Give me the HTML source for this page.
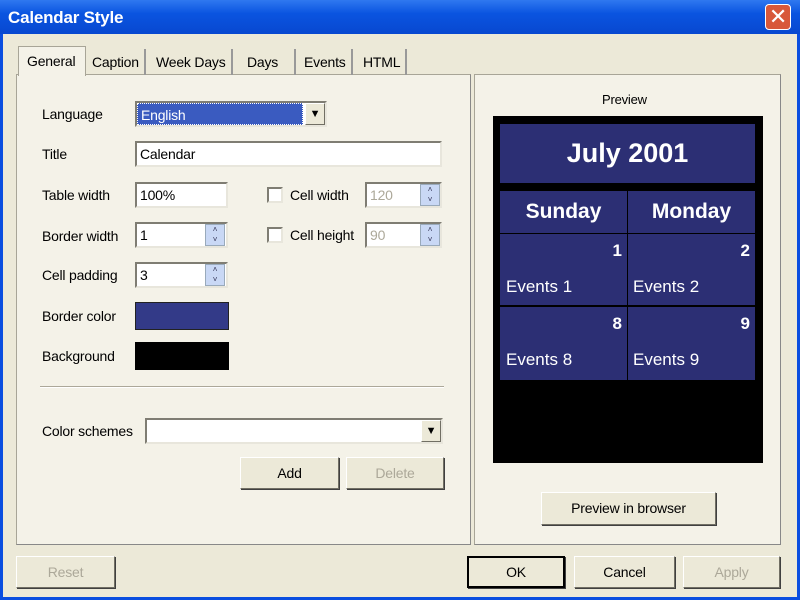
<!DOCTYPE html>
<html><head><style>
*{box-sizing:border-box;margin:0;padding:0}
body{width:800px;height:600px;overflow:hidden;background:#0a4ee0;font-family:"Liberation Sans",sans-serif;font-size:14px;color:#000;position:relative;letter-spacing:-0.2px}
.a{position:absolute}
.title{left:0;top:0;width:800px;height:34px;background:linear-gradient(#2f78f0,#0a54e0 40%,#0848d0);color:#fff;font-weight:bold;font-size:17px;padding:8px 8px}
.close{left:765px;top:4px;width:26px;height:26px;background:#d8583a;border:1px solid #fff;border-radius:4px;color:#fff;font-size:22px;text-align:center;line-height:24px}
.client{left:3px;top:34px;width:794px;height:563px;background:#ece9d8}
.panel{border:1px solid #a8a597;border-right-color:#888;border-bottom-color:#888;background:#f4f2e8}
.in{background:#fff;border:2px solid;border-color:#7f7d73 #e8e6dc #e8e6dc #7f7d73;padding:3px 3px}
.btn{background:#ece9d8;border:1px solid;border-color:#fff #716f64 #716f64 #fff;box-shadow:1px 1px 0 #404040;text-align:center;line-height:30px}
.dis{color:#aca899}
.tab{top:49px;height:26px;padding:5px 5px;border-right:2px solid #999}
.spin{width:20px;height:22px;background:#c9d8f5;border:1px solid #9ab;font-size:8px;color:#335;text-align:center;line-height:10px}
.cb{width:16px;height:16px;background:#fff;border:2px solid;border-color:#7f7d73 #e8e6dc #e8e6dc #7f7d73}
.cal{background:#2c2f74;color:#fff;letter-spacing:0}
</style></head><body>
<div class="a title">Calendar Style</div>
<div class="a close">✕</div>
<div class="a client"></div>
<div class="a panel" style="left:16px;top:74px;width:455px;height:471px"></div>
<div class="a panel" style="left:474px;top:74px;width:307px;height:471px"></div>
<div class="a" style="left:18px;top:46px;width:68px;height:30px;background:#f4f2e8;border:1px solid #a8a597;border-bottom:none;padding:6px 8px">General</div>
<div class="a tab" style="left:87px">Caption</div>
<div class="a tab" style="left:151px">Week Days</div>
<div class="a tab" style="left:242px;width:54px">Days</div>
<div class="a tab" style="left:299px">Events</div>
<div class="a tab" style="left:358px">HTML</div>

<div class="a" style="left:42px;top:106px">Language</div>
<div class="a in" style="left:135px;top:101px;width:192px;height:26px;padding:0"><div style="background:#3a5bc0;color:#fff;width:166px;height:22px;padding:3px 3px;border:1px dotted #fff">English</div><div class="a btn" style="right:0;top:0;width:20px;height:22px;line-height:20px;font-size:11px;box-shadow:none">▼</div></div>
<div class="a" style="left:42px;top:146px">Title</div>
<div class="a in" style="left:135px;top:141px;width:307px;height:26px">Calendar</div>
<div class="a" style="left:42px;top:187px">Table width</div>
<div class="a in" style="left:135px;top:182px;width:93px;height:26px">100%</div>
<div class="a" style="left:42px;top:228px">Border width</div>
<div class="a in" style="left:135px;top:222px;width:93px;height:26px">1</div>
<div class="a spin" style="left:205px;top:224px">˄<br>˅</div>
<div class="a" style="left:42px;top:267px">Cell padding</div>
<div class="a in" style="left:135px;top:262px;width:93px;height:26px">3</div>
<div class="a spin" style="left:205px;top:264px">˄<br>˅</div>
<div class="a" style="left:42px;top:308px">Border color</div>
<div class="a" style="left:135px;top:302px;width:94px;height:28px;background:#333a88;border:1px solid #222"></div>
<div class="a" style="left:42px;top:348px">Background</div>
<div class="a" style="left:135px;top:342px;width:94px;height:28px;background:#000"></div>
<div class="a cb" style="left:267px;top:187px"></div>
<div class="a" style="left:290px;top:187px">Cell width</div>
<div class="a in dis" style="left:365px;top:182px;width:77px;height:26px">120</div>
<div class="a spin" style="left:420px;top:184px">˄<br>˅</div>
<div class="a cb" style="left:267px;top:227px"></div>
<div class="a" style="left:290px;top:227px">Cell height</div>
<div class="a in dis" style="left:365px;top:222px;width:77px;height:26px">90</div>
<div class="a spin" style="left:420px;top:224px">˄<br>˅</div>
<div class="a" style="left:40px;top:386px;width:404px;height:2px;border-top:1px solid #aca899;border-bottom:1px solid #fff"></div>
<div class="a" style="left:42px;top:423px">Color schemes</div>
<div class="a in" style="left:145px;top:418px;width:298px;height:26px"></div>
<div class="a btn" style="left:421px;top:420px;width:20px;height:22px;line-height:20px;font-size:11px;box-shadow:none">▼</div>
<div class="a btn" style="left:240px;top:457px;width:99px;height:32px">Add</div>
<div class="a btn dis" style="left:346px;top:457px;width:98px;height:32px">Delete</div>

<div class="a" style="left:602px;top:92px;font-size:13px">Preview</div>
<div class="a" style="left:493px;top:116px;width:270px;height:347px;background:#000"></div>
<div class="a cal" style="left:500px;top:124px;width:255px;height:59px;font-size:27px;font-weight:bold;text-align:center;line-height:58px">July 2001</div>
<div class="a cal" style="left:500px;top:191px;width:127px;height:42px;font-size:21px;font-weight:bold;text-align:center;line-height:42px">Sunday</div>
<div class="a cal" style="left:628px;top:191px;width:127px;height:42px;font-size:21px;font-weight:bold;text-align:center;line-height:42px">Monday</div>
<div class="a cal" style="left:500px;top:234px;width:127px;height:71px;font-size:17px"><b class="a" style="right:5px;top:7px">1</b><span class="a" style="left:6px;top:43px">Events 1</span></div>
<div class="a cal" style="left:628px;top:234px;width:127px;height:71px;font-size:17px"><b class="a" style="right:5px;top:7px">2</b><span class="a" style="left:5px;top:43px">Events 2</span></div>
<div class="a cal" style="left:500px;top:307px;width:127px;height:73px;font-size:17px"><b class="a" style="right:5px;top:7px">8</b><span class="a" style="left:6px;top:43px">Events 8</span></div>
<div class="a cal" style="left:628px;top:307px;width:127px;height:73px;font-size:17px"><b class="a" style="right:5px;top:7px">9</b><span class="a" style="left:5px;top:43px">Events 9</span></div>
<div class="a btn" style="left:541px;top:492px;width:175px;height:33px">Preview in browser</div>

<div class="a btn dis" style="left:16px;top:556px;width:99px;height:32px">Reset</div>
<div class="a btn" style="left:467px;top:556px;width:98px;height:32px;border:2px solid #000;line-height:28px">OK</div>
<div class="a btn" style="left:574px;top:556px;width:101px;height:32px">Cancel</div>
<div class="a btn dis" style="left:683px;top:556px;width:97px;height:32px">Apply</div>
</body></html>
